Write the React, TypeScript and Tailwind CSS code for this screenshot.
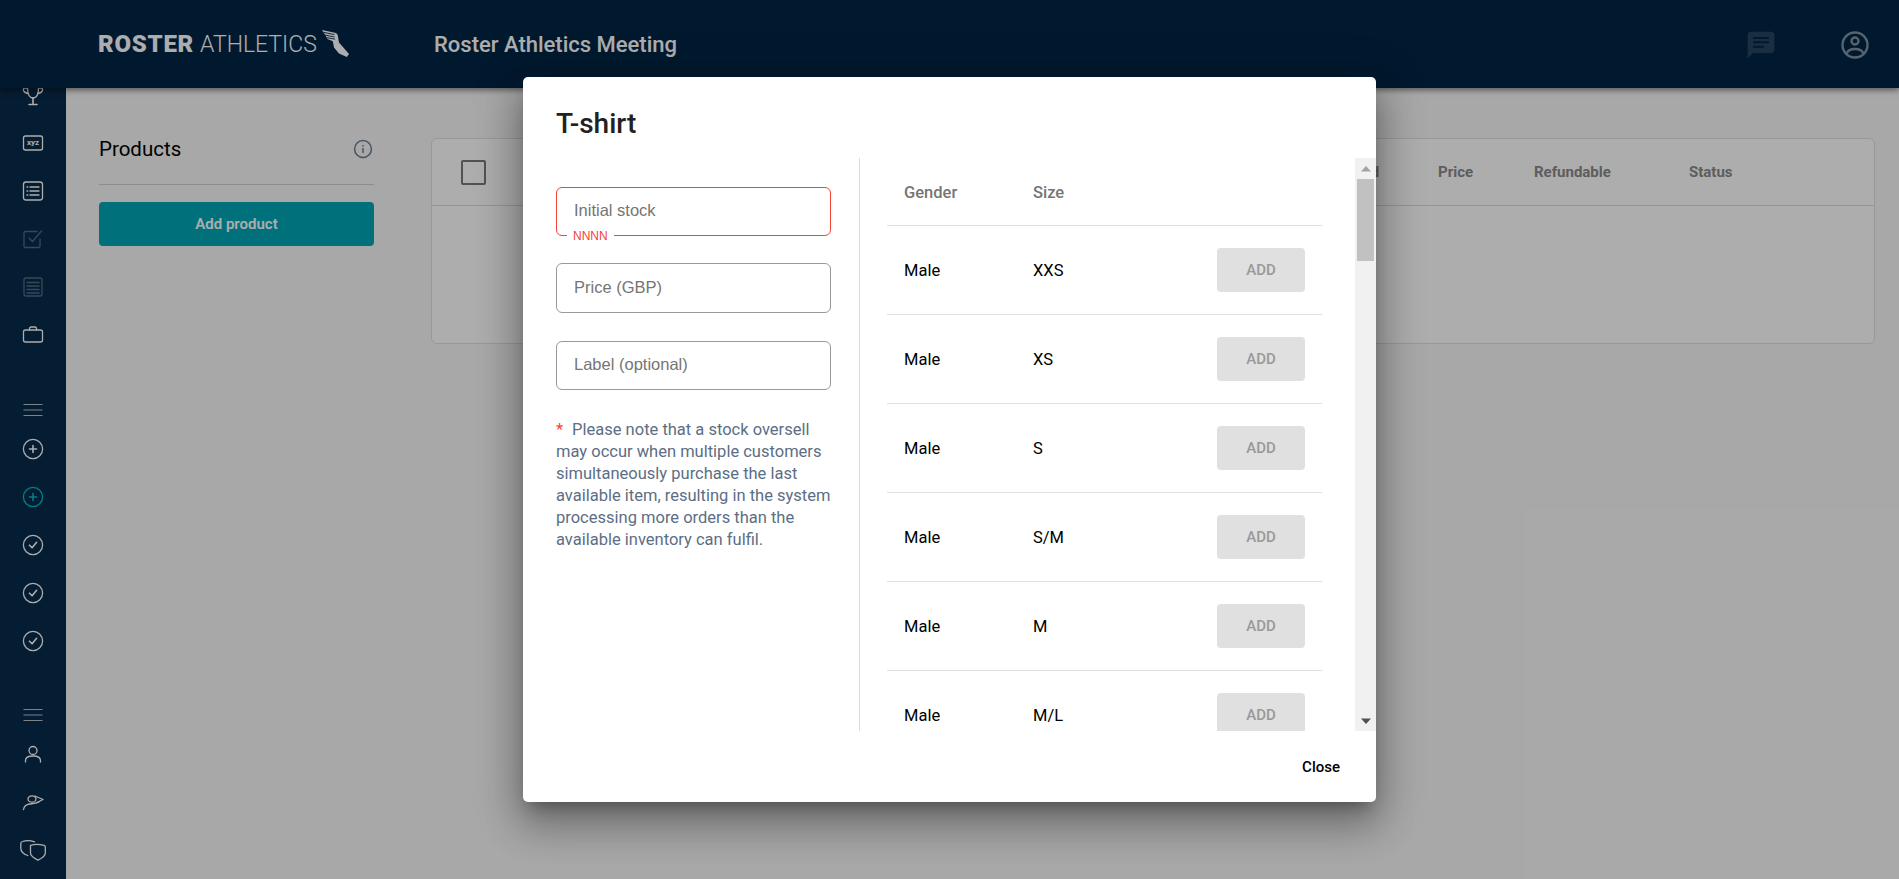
import React from "react";

const rows = [
  { gender: "Male", size: "XXS" },
  { gender: "Male", size: "XS" },
  { gender: "Male", size: "S" },
  { gender: "Male", size: "S/M" },
  { gender: "Male", size: "M" },
  { gender: "Male", size: "M/L" },
];

const SideIcon = ({ children, dim, teal }: { children: React.ReactNode; dim?: boolean; teal?: boolean }) => (
  <svg
    width="26"
    height="26"
    viewBox="0 0 26 26"
    fill="none"
    stroke={teal ? "#00b8cc" : "#ffffff"}
    strokeWidth="1.3"
    strokeLinecap="round"
    strokeLinejoin="round"
    className={dim ? "opacity-30" : ""}
  >
    {children}
  </svg>
);

const Burger = () => (
  <svg width="26" height="26" viewBox="0 0 26 26" stroke="#ffffff" strokeWidth="1" className="opacity-70">
    <path d="M3.500 7.500h19M3.500 13h19M3.500 18.500h19" />
  </svg>
);

const Plus = ({ teal }: { teal?: boolean }) => (
  <SideIcon teal={teal}>
    <circle cx="13" cy="13" r="9.600" />
    <path d="M13 9.500v7M9.500 13h7" strokeWidth="1.600" />
  </SideIcon>
);

const Check = () => (
  <SideIcon>
    <circle cx="13" cy="13" r="9.600" />
    <path d="M9.500 13.200l2.600 2.600 4.500-5.500" strokeWidth="1.600" />
  </SideIcon>
);

const NavItem = ({ children }: { children: React.ReactNode }) => (
  <div className="h-[48px] flex items-center justify-center shrink-0">{children}</div>
);

const Sidebar = () => (
  <aside className="w-[66px] shrink-0 bg-[#072b4b] overflow-hidden flex flex-col -mt-[17px]">
    <NavItem>
      <SideIcon>
        <path d="M7.500 6c0 6 2 10 5.500 10s5.500-4 5.500-10" />
        <path d="M7.500 6H5c-1.500 0-1.800 1.500-1.500 2.500.5 1.500 2 2.500 4.500 3M18.500 6H21c1.500 0 1.800 1.500 1.500 2.500-.5 1.500-2 2.500-4.500 3" />
        <path d="M13 16v6M9 22.500h8" strokeWidth="1.600" />
      </SideIcon>
    </NavItem>
    <NavItem>
      <SideIcon>
        <rect x="3.500" y="6" width="19" height="14" rx="2" />
        <text x="13" y="15" textAnchor="middle" fontSize="8" fontWeight="700" fill="#ffffff" stroke="none" fontFamily="Roboto, sans-serif">xyz</text>
      </SideIcon>
    </NavItem>
    <NavItem>
      <SideIcon>
        <rect x="3.500" y="4" width="19" height="18" rx="2.500" />
        <path d="M7 9h.8M7 13h.8M7 17h.8M10 9h9M10 13h9M10 17h9" />
      </SideIcon>
    </NavItem>
    <NavItem>
      <SideIcon dim>
        <path d="M20 13v7a1.500 1.500 0 0 1-1.500 1.500h-13A1.500 1.500 0 0 1 4 20V7a1.500 1.500 0 0 1 1.500-1.500H17" />
        <path d="M9 12l3.500 3.500L21.500 5" />
      </SideIcon>
    </NavItem>
    <NavItem>
      <SideIcon dim>
        <rect x="4" y="4" width="18" height="18" rx="2" />
        <path d="M7 8.500h12M7 12h12M7 15.500h12M7 19h12" />
      </SideIcon>
    </NavItem>
    <NavItem>
      <SideIcon>
        <rect x="3.500" y="8" width="19" height="12" rx="2" />
        <path d="M9.500 8V6.500A1.500 1.500 0 0 1 11 5h4a1.500 1.500 0 0 1 1.500 1.500V8" />
      </SideIcon>
    </NavItem>

    <div className="h-[30px] mt-[36px] flex items-center justify-center shrink-0">
      <Burger />
    </div>
    <NavItem><Plus /></NavItem>
    <NavItem><Plus teal /></NavItem>
    <NavItem><Check /></NavItem>
    <NavItem><Check /></NavItem>
    <NavItem><Check /></NavItem>

    <div className="h-[30px] mt-[35px] flex items-center justify-center shrink-0">
      <Burger />
    </div>
    <NavItem>
      <SideIcon>
        <circle cx="13" cy="9.500" r="4" />
        <path d="M5.500 21v-1.500c0-3 3-4.500 7.500-4.500s7.500 1.500 7.500 4.500V21" />
      </SideIcon>
    </NavItem>
    <NavItem>
      <SideIcon>
        <ellipse cx="12" cy="10" rx="4" ry="3.200" />
        <path d="M15 7l8 3.500-7 3.500" />
        <path d="M3.500 20.500c.5-3 2.500-5 6-5.500 4-.5 7-.5 9.500-2" />
      </SideIcon>
    </NavItem>
    <NavItem>
      <SideIcon>
        <path d="M14.500 4.800C10 3.300 6 3.300 2.500 4.500 1.500 4.800.8 5.500.8 6.500v4.500c0 3.500 2.500 6 7 7.500" />
        <path d="M10.500 8.300c4.500-1.500 8-1.500 13.500 0 .8.200 1.300.8 1.300 1.700v6c0 3.500-4.500 5.800-7.300 7.200-2.800-1.400-7.500-3.700-7.500-7.200v-6c0-.9 0-1.500 0-1.700z" />
      </SideIcon>
    </NavItem>
  </aside>
);

const WingedShoe = () => (
  <svg width="27" height="27" viewBox="0 0 27 27" className="ml-[5px] -mt-[1px]">
    <path d="M0 0l13 2.800c1.500.4 2.500 1.300 2.800 2.700L17 12.500l10 11.500-2.200 3-7.800-3.500-5-6-1.200-6.200L5.500 9 3.500 5.500z" fill="#ffffff" />
    <path d="M1.500 2.300l11 2.300M3 5l9.500 2M5 7.600l8 1.600" fill="none" stroke="#002545" strokeWidth="0.9" />
  </svg>
);

const Header = () => (
  <header className="h-[88px] shrink-0 bg-[#002545] relative z-10 shadow-[0_2px_6px_rgba(0,0,0,0.5)] flex items-center">
    <div className="ml-[98px] w-[336px] flex items-center text-white font-['Roboto',sans-serif] leading-none">
      <span className="font-black text-[24px] tracking-[0.75px]">ROSTER</span>
      <span className="font-light text-[23px] ml-[6px]">ATHLETICS</span>
      <WingedShoe />
    </div>
    <h1 className="font-['Roboto',sans-serif] font-medium text-[22px] text-white">Roster Athletics Meeting</h1>
    <div className="ml-auto mr-[28px] flex items-center gap-[62px]">
      <svg width="32" height="32" viewBox="0 0 24 24" fill="#ffffff" fillRule="evenodd" className="opacity-15 mt-[2px]">
        <path d="M20 2H4c-1.100 0-2 .9-2 2v18l4-4h14c1.100 0 2-.9 2-2V4c0-1.100-.9-2-2-2zM6 12.500h8V14H6zm0-3.250h12v1.500H6zM6 6h12v1.500H6z" />
      </svg>
      <svg width="32" height="32" viewBox="0 0 32 32" fill="none" stroke="#ffffff" strokeWidth="2.400" className="opacity-50 mt-[2px]">
        <circle cx="16" cy="16" r="12.500" />
        <circle cx="16" cy="12" r="3.500" />
        <path d="M7.500 25c1-3.500 4-5 8.500-5s7.500 1.500 8.500 5" />
      </svg>
    </div>
  </header>
);

const Main = () => (
  <main className="flex-1 bg-[#f8f8f8] flex items-start pl-[33px] pr-[24px] pt-[50px] font-['Roboto',sans-serif]">
    <section className="w-[275px] shrink-0">
      <div className="h-[47px] flex items-start justify-between border-b border-[#d0d0d0]">
        <h2 className="text-[20.500px] leading-[23px] text-black">Products</h2>
        <svg width="20" height="20" viewBox="0 0 20 20" fill="none" stroke="#6b7c8f" strokeWidth="1.500" className="mt-[1px] mr-[1px]">
          <circle cx="10" cy="10" r="8.400" />
          <path d="M10 9v5M10 6v1.400" />
        </svg>
      </div>
      <button className="mt-[17px] w-full h-[44px] rounded-[4px] bg-[#00a5b6] text-white text-[15px] font-semibold">Add product</button>
    </section>
    <section className="ml-[57px] flex-1 h-[206px] bg-white border border-[#e0e0e0] rounded-[6px]">
      <div className="h-[67px] flex items-center border-b border-[#dcdcdc] text-[15px] font-bold text-[#8a8a8a]">
        <span className="ml-[29px] w-[25px] h-[25px] rounded-[2px] border-2 border-[#7a7a7a]" />
        <span className="ml-[863px] w-[89px]">Sold</span>
        <span className="w-[96px]">Price</span>
        <span className="w-[155px]">Refundable</span>
        <span>Status</span>
      </div>
    </section>
  </main>
);

const Field = ({ placeholder, error, className }: { placeholder: string; error?: boolean; className: string }) => (
  <div className={`relative ${className}`}>
    <input
      placeholder={placeholder}
      readOnly
      className={`w-full h-full px-[17px] pb-[2px] rounded-[6px] border bg-white text-[16.500px] font-['Liberation_Sans',sans-serif] placeholder:text-[#757575] outline-none ${
        error ? "border-[#f44336]" : "border-[#999999]"
      }`}
    />
    {error && (
      <span className="absolute left-[11px] -bottom-[7px] px-[6px] bg-white text-[#f44336] text-[12px] leading-[14px] font-['Liberation_Sans',sans-serif]">
        NNNN
      </span>
    )}
  </div>
);

const Scrollbar = () => (
  <div className="w-[21px] shrink-0 bg-[#f1f1f1] flex flex-col items-center">
    <div className="h-[21px] flex items-center justify-center">
      <svg width="10" height="6" viewBox="0 0 10 6" fill="#a3a3a3"><path d="M5 0l5 5.500H0z" /></svg>
    </div>
    <div className="w-[17px] h-[82px] bg-[#c1c1c1]" />
    <div className="flex-1" />
    <div className="h-[21px] flex items-center justify-center">
      <svg width="10" height="6" viewBox="0 0 10 6" fill="#505050"><path d="M5 6L0 .5h10z" /></svg>
    </div>
  </div>
);

const ProductDialog = () => (
  <div className="absolute inset-0 z-20 bg-black/32 flex items-center justify-center font-['Roboto',sans-serif]">
    <div className="w-[853px] h-[725px] bg-white rounded-[5px] flex flex-col shadow-[0_11px_15px_-7px_rgba(0,0,0,0.3),0_24px_38px_3px_rgba(0,0,0,0.2),0_9px_46px_8px_rgba(0,0,0,0.2)]">
      <div className="h-[81px] shrink-0 pl-[33px] pt-[30px]">
        <h2 className="text-[28px] leading-[34px] font-medium text-[#212121]">T-shirt</h2>
      </div>
      <div className="h-[573px] shrink-0 flex">
        <div className="w-[337px] shrink-0 border-r border-[#dcdcdc] pl-[33px] pr-[28px] pt-[29px]">
          <div className="flex flex-col">
            <Field placeholder="Initial stock" error className="h-[49px]" />
            <Field placeholder="Price (GBP)" className="h-[50px] mt-[27px]" />
            <Field placeholder="Label (optional)" className="h-[49px] mt-[28px]" />
          </div>
          <p className="mt-[29px] text-[16.500px] leading-[22px] text-[#5c6e84]">
            <span className="text-[#f44336] mr-[9px]">*</span>
            Please note that a stock oversell may occur when multiple customers simultaneously purchase the last available item, resulting in the system processing more orders than the available inventory can fulfil.
          </p>
        </div>
        <div className="flex-1 flex justify-between overflow-hidden pl-[27px]">
          <div className="w-[435px] shrink-0">
            <div className="h-[68px] flex items-center border-b border-[#e0e0e0] pl-[17px] pt-[4px] text-[16.500px] font-medium text-[#757575]">
              <span className="w-[129px]">Gender</span>
              <span>Size</span>
            </div>
            {rows.map((row) => (
              <div key={row.size} className="h-[89px] flex items-center border-b border-[#e0e0e0] pl-[17px] pr-[17px] text-[16.500px] text-black">
                <span className="w-[129px] pt-[2px]">{row.gender}</span>
                <span className="pt-[2px]">{row.size}</span>
                <button className="ml-auto w-[88px] h-[44px] rounded-[4px] bg-[#e0e0e0] text-[#999999] text-[15px] font-medium">ADD</button>
              </div>
            ))}
          </div>
          <Scrollbar />
        </div>
      </div>
      <div className="flex-1 flex items-center justify-end pr-[36px] pt-[1px]">
        <button className="text-[15px] font-medium text-black">Close</button>
      </div>
    </div>
  </div>
);

export default function App() {
  return (
    <div className="relative h-[879px] w-full overflow-hidden flex flex-col">
      <Header />
      <div className="flex-1 flex min-h-0">
        <Sidebar />
        <Main />
      </div>
      <ProductDialog />
    </div>
  );
}
